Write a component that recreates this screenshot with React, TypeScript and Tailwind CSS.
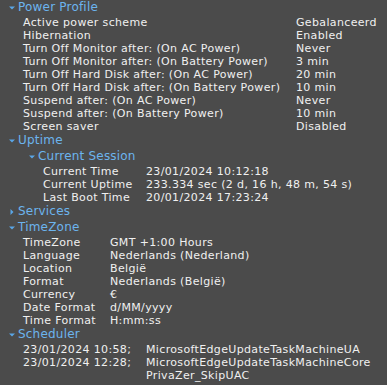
import React from "react";

type Row = [string, string];

const power: Row[] = [
  ["Active power scheme", "Gebalanceerd"],
  ["Hibernation", "Enabled"],
  ["Turn Off Monitor after: (On AC Power)", "Never"],
  ["Turn Off Monitor after: (On Battery Power)", "3 min"],
  ["Turn Off Hard Disk after: (On AC Power)", "20 min"],
  ["Turn Off Hard Disk after: (On Battery Power)", "10 min"],
  ["Suspend after: (On AC Power)", "Never"],
  ["Suspend after: (On Battery Power)", "10 min"],
  ["Screen saver", "Disabled"],
];

const session: Row[] = [
  ["Current Time", "23/01/2024 10:12:18"],
  ["Current Uptime", "233.334 sec (2 d, 16 h, 48 m, 54 s)"],
  ["Last Boot Time", "20/01/2024 17:23:24"],
];

const timezone: Row[] = [
  ["TimeZone", "GMT +1:00 Hours"],
  ["Language", "Nederlands (Nederland)"],
  ["Location", "België"],
  ["Format", "Nederlands (België)"],
  ["Currency", "€"],
  ["Date Format", "d/MM/yyyy"],
  ["Time Format", "H:mm:ss"],
];

const scheduler: Row[] = [
  ["23/01/2024 10:58;", "MicrosoftEdgeUpdateTaskMachineUA"],
  ["23/01/2024 12:28;", "MicrosoftEdgeUpdateTaskMachineCore"],
  ["", "PrivaZer_SkipUAC"],
];

function Arrow({ open = true }: { open?: boolean }) {
  return open ? (
    <svg width="6" height="4" viewBox="0 0 6 4" className="shrink-0">
      <path d="M0 0.5h6L3 3.5z" fill="#5aa6e6" />
    </svg>
  ) : (
    <svg width="4" height="6" viewBox="0 0 4 6" className="shrink-0">
      <path d="M0.5 0v6L3.5 3z" fill="#5aa6e6" />
    </svg>
  );
}

function Header({ title, open = true, indent }: { title: string; open?: boolean; indent: string }) {
  return (
    <div className={`flex h-[16px] items-center ${indent}`}>
      <div className="flex w-[13px] justify-center">
        <Arrow open={open} />
      </div>
      <span className="pb-[2px] text-[12px] tracking-[0.2px] text-[#6cb4ee]">{title}</span>
    </div>
  );
}

function Rows({ rows, labelW, indent }: { rows: Row[]; labelW: string; indent: string }) {
  return (
    <div className={indent}>
      {rows.map(([k, v], i) => (
        <div key={i} className="flex h-[13px] items-center whitespace-nowrap tracking-[0.35px]">
          <span className={`shrink-0 ${labelW}`}>{k}</span>
          <span>{v}</span>
        </div>
      ))}
    </div>
  );
}

export default function App() {
  return (
    <div
      className="h-[385px] w-[387px] overflow-hidden bg-[#4b4b4b] text-[11px] leading-[13px] text-[#f0f0f0]"
      style={{ fontFamily: "'DejaVu Sans', Verdana, sans-serif" }}
    >
      <Header title="Power Profile" indent="pl-[5px]" />
      <Rows rows={power} labelW="w-[273px]" indent="pl-[23px]" />
      <Header title="Uptime" indent="pl-[5px]" />
      <Header title="Current Session" indent="pl-[25px]" />
      <Rows rows={session} labelW="w-[103px]" indent="pl-[43px]" />
      <Header title="Services" open={false} indent="pl-[5px]" />
      <Header title="TimeZone" indent="pl-[5px]" />
      <Rows rows={timezone} labelW="w-[87px]" indent="pl-[23px]" />
      <Header title="Scheduler" indent="pl-[5px]" />
      <Rows rows={scheduler} labelW="w-[123px]" indent="pl-[23px]" />
    </div>
  );
}
